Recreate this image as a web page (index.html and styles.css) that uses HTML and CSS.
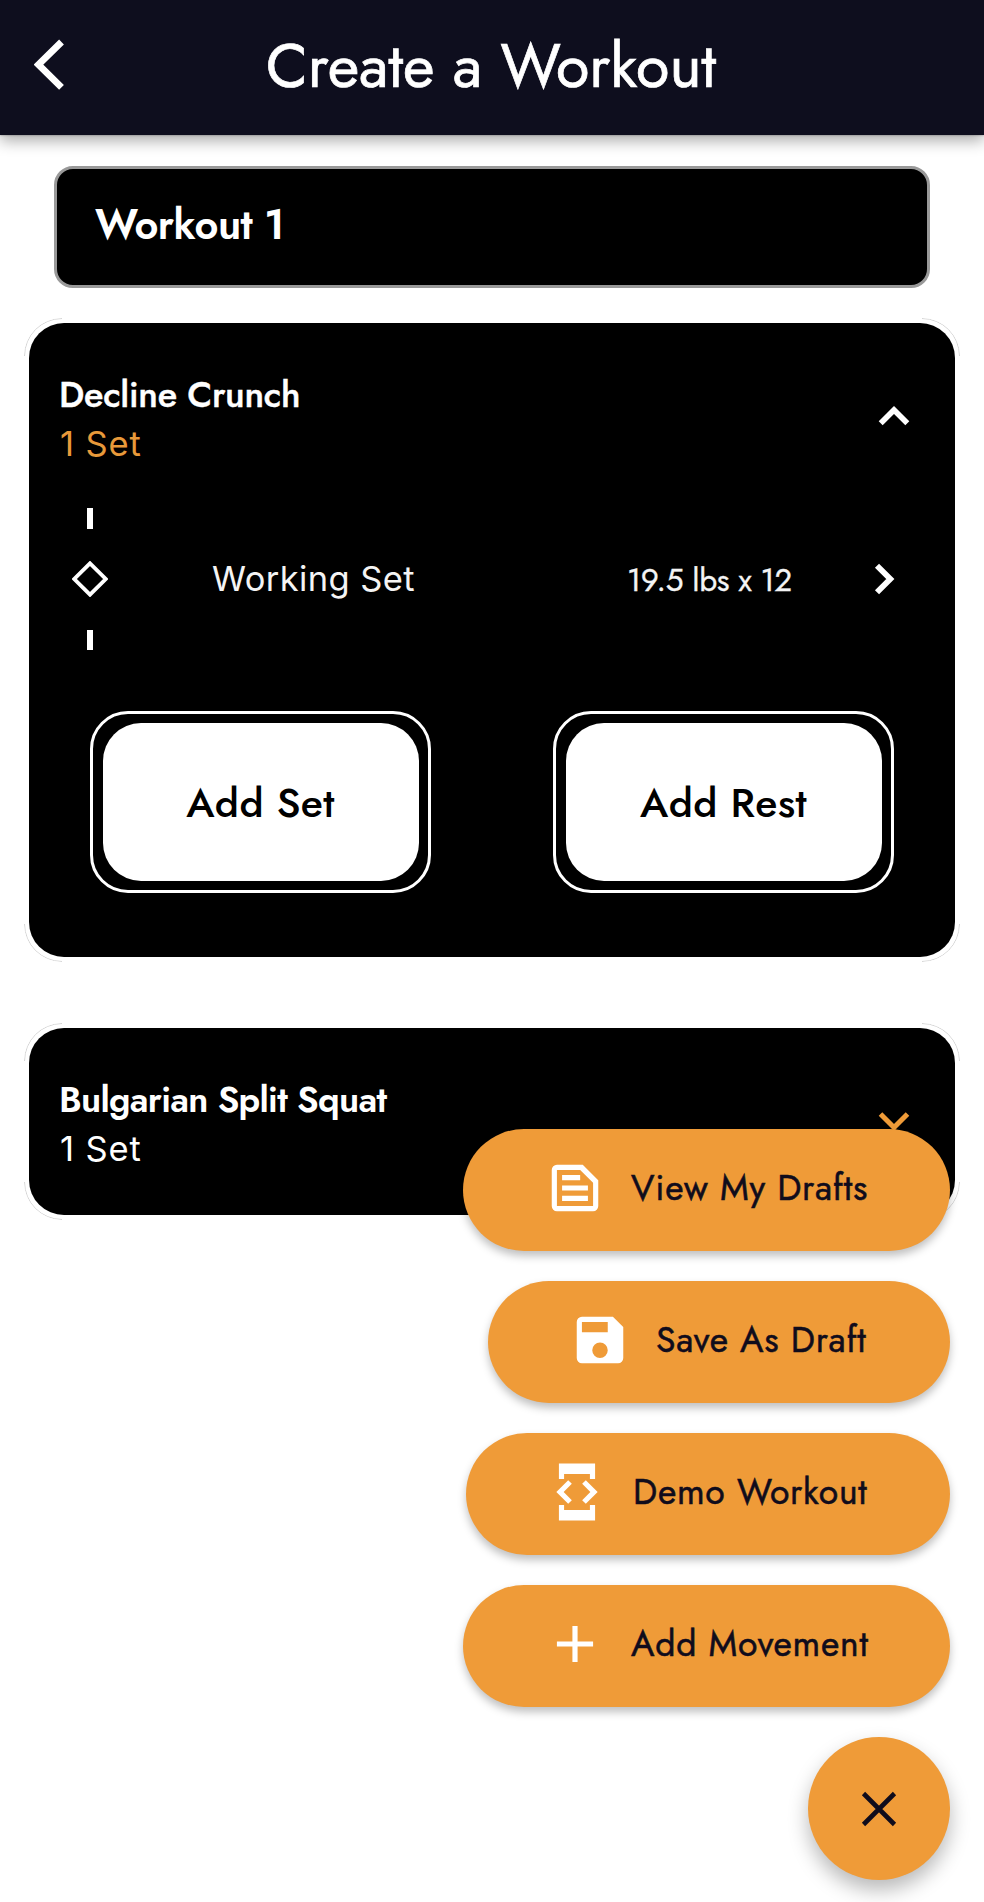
FILE: index.html
```html
<!DOCTYPE html>
<html lang="en">
<head>
<meta charset="utf-8">
<title>Create a Workout</title>
<link rel="stylesheet" href="styles.css">
</head>
<body>
<div class="screen">
  <header class="topbar">
    <button class="back" aria-label="Back"><svg width="30" height="52" viewBox="0 0 30 52"><path d="M27.500 3 4.500 25.700l23 22.700" fill="none" stroke="#fff" stroke-width="6.800"/></svg></button>
    <h1 class="topbar-title">Create a Workout</h1>
  </header>
  <main class="content">
    <div class="name-field"><span class="name-text">Workout 1</span></div>
    <section class="card card-open">
      <div class="card-head">
        <div class="card-info">
          <h2 class="card-title crunch">Decline Crunch</h2>
          <p class="card-sub accent">1 Set</p>
        </div>
        <svg class="toggle" width="32" height="22" viewBox="0 0 32 22"><path d="M2.700 18.300 16 5l13.300 13.300" fill="none" stroke="#fff" stroke-width="5.600"/></svg>
      </div>
      <div class="set-row">
        <div class="rail">
          <span class="tick"></span>
          <svg width="36" height="36" viewBox="0 0 36 36"><path d="M18 2.300 33.700 18 18 33.700 2.300 18Z" fill="none" stroke="#fff" stroke-width="3.800"/></svg>
          <span class="tick"></span>
        </div>
        <span class="set-name">Working Set</span>
        <span class="set-value">19.5 lbs x 12</span>
        <svg class="set-go" width="22" height="32" viewBox="0 0 22 32"><path d="M4 2.700 17.300 16 4 29.300" fill="none" stroke="#fff" stroke-width="5.800"/></svg>
      </div>
      <div class="actions">
        <button class="action"><span class="action-face">Add Set</span></button>
        <button class="action"><span class="action-face">Add Rest</span></button>
      </div>
    </section>
    <section class="card">
      <div class="card-head">
        <div class="card-info">
          <h2 class="card-title squat">Bulgarian Split Squat</h2>
          <p class="card-sub">1 Set</p>
        </div>
        <svg class="toggle" width="32" height="22" viewBox="0 0 32 22"><path d="M2.500 4 16 17.500 29.500 4" fill="none" stroke="#ef9b38" stroke-width="5"/></svg>
      </div>
    </section>
  </main>
  <nav class="fab-menu">
    <button class="pill pill-view">
      <svg width="62" height="62" viewBox="0 0 24 24"><path fill="#fff" fill-rule="evenodd" d="M15 3H5a2 2 0 0 0-2 2v14a2 2 0 0 0 2 2h14a2 2 0 0 0 2-2V9ZM5 5v14h14V10L14 5ZM7 7h7v2H7ZM7 11h10v2H7ZM7 15h10v2H7Z"/></svg>
      <span>View My Drafts</span>
    </button>
    <button class="pill pill-save">
      <svg width="62" height="62" viewBox="0 0 24 24"><path fill="#fff" fill-rule="evenodd" d="M17 3H5a2 2 0 0 0-2 2v14a2 2 0 0 0 2 2h14a2 2 0 0 0 2-2V7ZM5 5h10v4H5ZM12 13a3 3 0 1 1 0 6 3 3 0 0 1 0-6Z"/></svg>
      <span>Save As Draft</span>
    </button>
    <button class="pill pill-demo">
      <svg width="62" height="62" viewBox="0 0 24 24"><path fill="#fff" d="M5 1h14v6h-2V5H7v2H5ZM5 17h2v2h10v-2h2v6H5ZM15.410 16.590 20 12l-4.590-4.590L14 8.830 17.170 12 14 15.170ZM10 15.170 6.830 12 10 8.830 8.590 7.410 4 12l4.590 4.590Z"/></svg>
      <span>Demo Workout</span>
    </button>
    <button class="pill pill-add">
      <svg width="62" height="62" viewBox="0 0 24 24"><path fill="#fff" d="M19 13h-6v6h-2v-6H5v-2h6V5h2v6h6Z"/></svg>
      <span>Add Movement</span>
    </button>
    <button class="fab" aria-label="Close"><svg width="36" height="36" viewBox="0 0 36 36"><path d="M2.500 2.500 33.500 33.500M33.500 2.500 2.500 33.500" stroke="#100c1c" stroke-width="4.600"/></svg></button>
  </nav>
</div>
</body>
</html>
```
FILE: styles.css
```css
* { box-sizing: border-box; margin: 0; padding: 0; }
body { background: #fff; font-family: "Jost", "Futura", "Lato", sans-serif; }
button { border: 0; background: none; font: inherit; color: inherit; }
svg { display: block; flex: none; }
.screen { position: relative; width: 984px; height: 1902px; overflow: hidden; background: #fff; }

.topbar {
  display: grid; grid-template-columns: 140px 1fr 140px; align-items: center;
  height: 135px; background: #0e0e1e; box-shadow: 0 6px 14px rgba(0,0,0,.32), 0 0 2px rgba(0,0,0,.4);
}
.back { padding: 0 0 6px 34px; }
.topbar-title { font-size: 61px; font-weight: 400; line-height: 72px; color: #fff; text-align: center; white-space: nowrap; padding: 0 2px 4px 0; -webkit-text-stroke: .7px #fff; }

.content { padding: 31px 29px 0; }
.name-field {
  display: flex; align-items: center; height: 122px; margin: 0 25px 35px; padding: 0 38px 4px;
  background: #000; border: 3px solid #999; border-radius: 19px;
}
.name-text { font-size: 41.500px; font-weight: 600; color: #fff; letter-spacing: -.5px; }

.card { position: relative; height: 187px; padding: 48px 45px 0 31px; background: #000; border-radius: 35px; }
.card-open { height: 634px; margin-bottom: 71px; }
.card::after {
  content: ""; position: absolute; inset: -5px; border: 1px solid #d4d4d4; border-radius: 38px; pointer-events: none;
  -webkit-mask: linear-gradient(#000 0 0) 0 0/38px 38px no-repeat, linear-gradient(#000 0 0) 100% 0/38px 38px no-repeat,
    linear-gradient(#000 0 0) 0 100%/38px 38px no-repeat, linear-gradient(#000 0 0) 100% 100%/38px 38px no-repeat;
}
.card-head { display: flex; justify-content: space-between; height: 103px; }
.card-title { margin-left: -1px; font-size: 36px; font-weight: 500; line-height: 46px; color: #fff; white-space: nowrap; }
.crunch { letter-spacing: -.25px; -webkit-text-stroke: .4px #fff; }
.squat { font-weight: 600; letter-spacing: -.72px; }
.card-sub { font-family: "Inter", sans-serif; font-size: 34.500px; line-height: 50px; margin-top: 2px; letter-spacing: .9px; color: #fff; }
.accent { color: #e8993a; }
.toggle { margin-top: 34px; }

.set-row { display: grid; grid-template-columns: 60px 92px 1fr auto 119px; align-items: center; height: 142px; margin: 34px -1px 0 0; }
.rail { grid-column: 1; display: flex; flex-direction: column; align-items: center; justify-content: space-between; height: 142px; }
.tick { width: 6px; height: 20.500px; background: #fff; }
.set-name { grid-column: 3; font-family: "Inter", sans-serif; font-size: 34.500px; letter-spacing: .4px; padding-bottom: 2px; color: #f4f4f4; }
.set-value { font-size: 31.500px; letter-spacing: -.3px; padding-top: 2px; color: #f4f4f4; -webkit-text-stroke: .3px #f4f4f4; }
.set-go { justify-self: end; margin-right: 16px; }

.actions { display: flex; justify-content: space-between; margin: 61px 16px 0 30px; }
.action { width: 341px; height: 182px; padding: 9px 9.500px; border: 3px solid #fff; border-radius: 38px; }
.action-face {
  display: flex; align-items: center; justify-content: center; height: 158px;
  background: #fff; border-radius: 38px; font-size: 41px; font-weight: 500; letter-spacing: .4px; color: #000;
}

.fab-menu { position: absolute; right: 34px; bottom: 22px; display: flex; flex-direction: column; align-items: flex-end; gap: 30px; }
.pill {
  display: flex; align-items: center; width: 487px; height: 122px; padding: 0 0 4px 80.500px; border-radius: 61px;
  background: #ef9b38; box-shadow: 0 5px 9px rgba(0,0,0,.25); font-size: 35.500px; letter-spacing: .75px; color: #100c1c; white-space: nowrap;
  -webkit-text-stroke: .5px #100c1c;
}
.pill span { margin-left: 25.500px; padding-bottom: 1px; }
.pill-save { width: 462px; }
.pill-demo { width: 484.500px; padding-left: 80px; }
.fab {
  display: flex; align-items: center; justify-content: center; width: 142px; height: 143px; border-radius: 50%;
  background: #ef9b38; box-shadow: 0 10px 20px rgba(0,0,0,.28);
}
```
